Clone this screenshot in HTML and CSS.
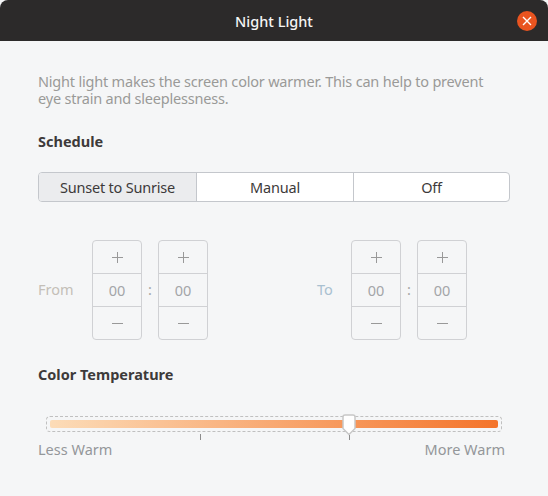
FILE: index.html
```html
<!DOCTYPE html>
<html lang="en-US">
<head>
	<title>Night Light</title>
	<meta http-equiv="Content-Type" content="text/html; charset=UTF-8">
	<link rel="stylesheet" href="styles.css">
</head>
<body>

<div class="window">
	<div class="titlebar">
		<span class="title">Night Light</span>
		<span class="close">
			<svg width="10" height="10" viewBox="0 0 10 10"><path d="M1 1L9 9M9 1L1 9" stroke="#fff" stroke-width="1.4" fill="none"/></svg>
		</span>
	</div>

	<div class="content">
		<p class="desc">Night light makes the screen color warmer. This can help to prevent<br>eye strain and sleeplessness.</p>

		<h2 class="heading">Schedule</h2>

		<div class="segments">
			<div class="seg seg-active">Sunset to Sunrise</div>
			<div class="seg">Manual</div>
			<div class="seg">Off</div>
		</div>

		<div class="times">
			<div class="time time-from">
				<span class="time-label label-from">From</span>
				<div class="spinner">
					<div class="spin-cell"><svg width="11" height="11" viewBox="0 0 11 11"><path d="M5.500 0V11M0 5.500H11" stroke="#999" fill="none"/></svg></div>
					<div class="spin-cell spin-value">00</div>
					<div class="spin-cell"><svg width="11" height="11" viewBox="0 0 11 11"><path d="M0 5.500H11" stroke="#999" fill="none"/></svg></div>
				</div>
				<span class="colon">:</span>
				<div class="spinner">
					<div class="spin-cell"><svg width="11" height="11" viewBox="0 0 11 11"><path d="M5.500 0V11M0 5.500H11" stroke="#999" fill="none"/></svg></div>
					<div class="spin-cell spin-value">00</div>
					<div class="spin-cell"><svg width="11" height="11" viewBox="0 0 11 11"><path d="M0 5.500H11" stroke="#999" fill="none"/></svg></div>
				</div>
			</div>
			<div class="time">
				<span class="time-label label-to">To</span>
				<div class="spinner">
					<div class="spin-cell"><svg width="11" height="11" viewBox="0 0 11 11"><path d="M5.500 0V11M0 5.500H11" stroke="#999" fill="none"/></svg></div>
					<div class="spin-cell spin-value">00</div>
					<div class="spin-cell"><svg width="11" height="11" viewBox="0 0 11 11"><path d="M0 5.500H11" stroke="#999" fill="none"/></svg></div>
				</div>
				<span class="colon">:</span>
				<div class="spinner">
					<div class="spin-cell"><svg width="11" height="11" viewBox="0 0 11 11"><path d="M5.500 0V11M0 5.500H11" stroke="#999" fill="none"/></svg></div>
					<div class="spin-cell spin-value">00</div>
					<div class="spin-cell"><svg width="11" height="11" viewBox="0 0 11 11"><path d="M0 5.500H11" stroke="#999" fill="none"/></svg></div>
				</div>
			</div>
		</div>

		<h2 class="heading heading-temp">Color Temperature</h2>

		<div class="slider">
			<div class="trough"><div class="fill"></div></div>
			<svg class="handle" width="15" height="22" viewBox="0 0 15 22"><path d="M3 1H11Q13 1 13 3V14.500L7 20.500L1 14.500V3Q1 1 3 1Z" fill="#fff" stroke="#c8c8c8" stroke-width="1.500"/></svg>
			<span class="tick tick-mid"></span>
			<span class="tick tick-value"></span>
		</div>

		<div class="scale-labels">
			<span>Less Warm</span>
			<span>More Warm</span>
		</div>
	</div>
</div>

</body>
</html>
```

FILE: styles.css
```css
html, body {
	margin: 0;
	padding: 0;
	background: #f5f6f7;
}

body {
	width: 548px;
	height: 496px;
	overflow: hidden;
	font-family: "Noto Sans", sans-serif;
	font-size: 14.500px;
}

.window {
	height: 496px;
	background: #f5f6f7;
}

.titlebar {
	height: 41px;
	background: #2c2a2a;
	border-radius: 8px 8px 0 0;
	display: flex;
	align-items: center;
	justify-content: center;
	position: relative;
}

.title {
	color: #f5f5f5;
	font-weight: 500;
	font-size: 14.500px;
}

.close {
	position: absolute;
	right: 11px;
	top: 11px;
	width: 20px;
	height: 20px;
	border-radius: 50%;
	background: #e95420;
	display: flex;
	align-items: center;
	justify-content: center;
}

.content {
	padding: 32px 38px 0;
}

.desc {
	margin: 0;
	color: #9a9a98;
	line-height: 17px;
	letter-spacing: -0.2px;
}

.heading {
	margin: 24px 0 0;
	font-size: 14.500px;
	font-weight: 700;
	line-height: 20px;
	color: #3d3a3a;
}

.segments {
	margin-top: 21px;
	height: 30px;
	width: 472px;
	display: grid;
	grid-template-columns: 157px 157px 156px;
	box-sizing: border-box;
	border: 1px solid #c4c7cc;
	border-radius: 4px;
	background: #fff;
	overflow: hidden;
}

.seg {
	display: flex;
	align-items: center;
	justify-content: center;
	color: #3d3a3a;
	border-left: 1px solid #c4c7cc;
	letter-spacing: -0.2px;
	padding-bottom: 1px;
}

.seg-active {
	background: #ebecee;
	border-left: 0;
}

.times {
	margin-top: 38px;
	display: flex;
}

.time {
	display: flex;
	align-items: center;
}

.time-from {
	width: 279px;
}

.time-label {
	width: 54px;
	padding-bottom: 2px;
}

.label-from {
	color: #c4bfb8;
}

.label-to {
	width: 34px;
	color: #a9c0d0;
}

.spinner {
	width: 50px;
	height: 100px;
	box-sizing: border-box;
	border: 1px solid #d0d1d4;
	border-radius: 4px;
	display: grid;
	grid-template-rows: 32px 33px 33px;
}

.spin-cell {
	display: flex;
	align-items: center;
	justify-content: center;
	border-top: 1px solid #d0d1d4;
}

.spin-cell:first-child {
	border-top: 0;
}

.spin-value {
	color: #a3a5a8;
}

.colon {
	width: 16px;
	text-align: center;
	color: #a8a8a6;
	padding-bottom: 2px;
}

.heading-temp {
	margin-top: 24px;
}

.slider {
	position: relative;
	margin: 32px 0 0 8px;
	width: 456px;
	height: 16px;
}

.trough {
	height: 16px;
	box-sizing: border-box;
	padding: 3px;
	border: 1px dashed #c0c0c0;
	border-radius: 4px;
}

.fill {
	height: 8px;
	border-radius: 2px;
	background: linear-gradient(to right, #fcdcb8, #f4742b);
}

.handle {
	position: absolute;
	left: 296px;
	top: -2px;
}

.tick {
	position: absolute;
	width: 1px;
	background: #8c8c8c;
}

.tick-mid {
	left: 154px;
	top: 18px;
	height: 6px;
}

.tick-value {
	left: 303px;
	top: 19px;
	height: 5px;
}

.scale-labels {
	margin-top: 7px;
	width: 467px;
	display: flex;
	justify-content: space-between;
	color: #94979a;
	line-height: 20px;
}
```
